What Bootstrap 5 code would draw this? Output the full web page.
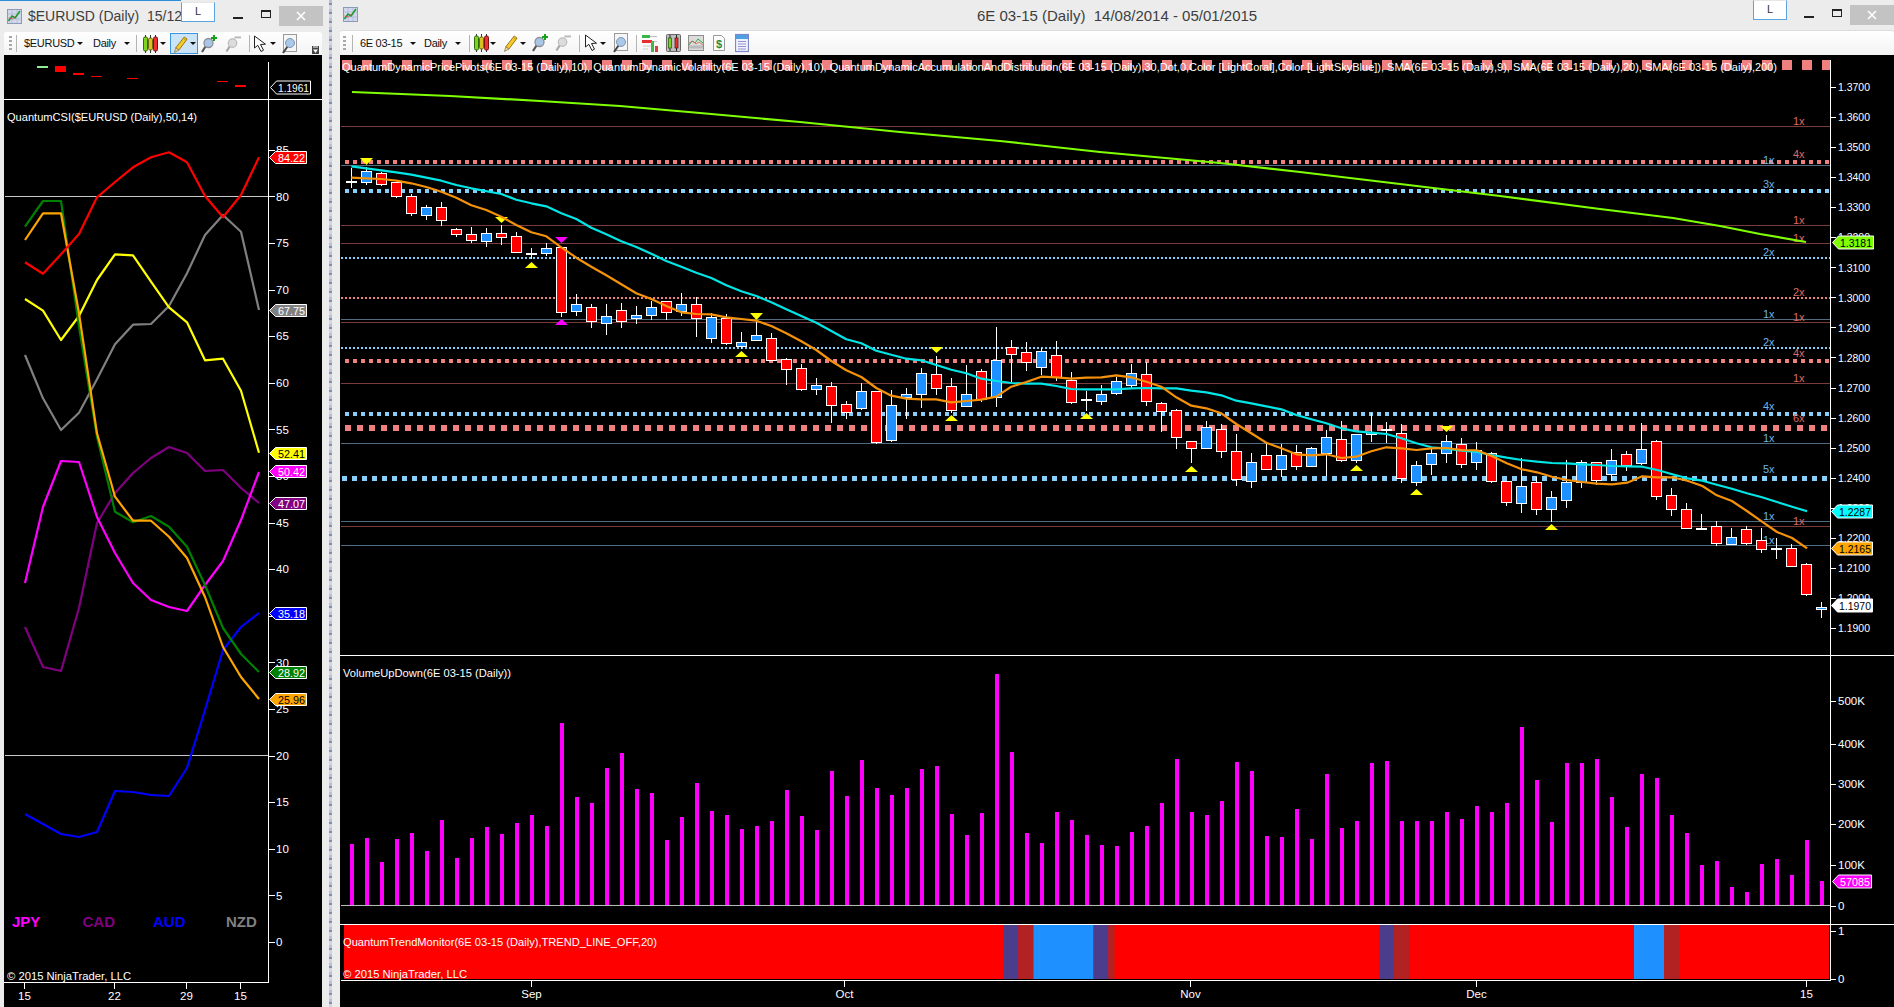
<!DOCTYPE html>
<html lang="en">
<head>
<meta charset="utf-8">
<title>6E 03-15 (Daily)</title>
<link href="https://cdn.jsdelivr.net/npm/bootstrap@5.3.0/dist/css/bootstrap.min.css" rel="stylesheet">
<style>
html,body{height:100%;overflow:hidden;margin:0}
body{font-family:"Liberation Sans",Arial,sans-serif;background:#ececec}
.desk{height:1007px}
.win{background:#ececec;height:1007px}
.win-l{width:329px;flex:none;padding:0 7px 0 4px}
.wallpaper{width:3px;flex:none;background:repeating-linear-gradient(180deg,#b9bfd6 0 3px,#7f8fb5 3px 5px,#d6d3e0 5px 9px)}
.win-r{flex:1 1 auto;padding-left:8px;min-width:0}
.ttl{color:#3d3d3d;font-size:14px;white-space:pre}
.ttl-l{height:32px;margin-left:-4px;margin-right:-7px;padding-left:7px;background:linear-gradient(#2b8fd8,#2b8fd8) no-repeat 0 0/181px 1px}
.ttl-r{height:30px;margin-left:-8px;padding-left:11px}
.wicon{width:15px;height:15px;flex:none}
.ttl-r .wicon{margin-top:-1px}
.ttxt{margin-left:6px}
.ttxt-c{position:absolute;left:645px;top:5px;font-size:15px}
.ltab{position:absolute;top:1px;height:20px;width:34px;background:#fff;border:1px solid #5aa3e0;border-top-color:#e6e6e6;font-size:11px;color:#333;text-align:center;line-height:17px}
.ltab-l{left:181px;top:2px}
.ltab-r{left:1421px;top:0}
.cbox{height:22px;align-items:center}
.cmin{width:10px;height:2.5px;background:#222;margin-top:4px}
.cmax{width:10px;height:8px;border:1.5px solid #222;border-top-width:2.5px;margin-left:18px;margin-top:-5px}
.cx{width:44px;height:20px;background:#c3c3c3;margin-left:8px;display:flex;align-items:center;justify-content:center}
.cbox-l{margin-right:6px;margin-top:0}
.cbox-l .cmax{margin-left:18px}
.tbar{height:23px;background:linear-gradient(#ffffff,#f3f3f3);font-size:11px;color:#111;border-radius:3px 3px 0 0;white-space:nowrap;flex:none}
.tbar-r{height:25px;border-top:1px solid #dcdcdc}
.sym{flex:none;letter-spacing:-.3px}
.sym-50{width:50px}.sym-43{width:43px}.sym-26{width:26px}
.ic{flex:none;height:20px}
.w3{width:3px}.w6{width:6px}.w12{width:12px}.w14{width:14px}.w15{width:15px}.w16{width:16px}
.grip{width:3px;height:15px;background:repeating-linear-gradient(180deg,#a8a8a8 0 2px,transparent 2px 4px);flex:none}
.vsep{width:1px;height:17px;background:#b4b4b4;flex:none}
.tcaret{width:0;height:0;border-left:3px solid transparent;border-right:3px solid transparent;border-top:3px solid #111;flex:none}
.hot{width:28px;height:21px;background:#cce4f7;border:1px solid #3a94e0;flex:none}
.more{width:7px;height:8px;flex:none;margin-right:3px;margin-top:13px}
.mg1{margin-left:1px}.mg2{margin-left:2px}.mg3{margin-left:3px}.mg4{margin-left:4px}.mg5{margin-left:5px}.mg6{margin-left:6px}.mg7{margin-left:7px}.mg8{margin-left:8px}.mg9{margin-left:9px}.mg10{margin-left:10px}
.chart{display:block;background:#000;flex:none}
.chart-l{width:318px;height:952px}
.chart-r{width:1554px;height:952px}
.chart text{font-family:"Liberation Sans",Arial,sans-serif;font-size:11px;fill:#fff}
.chart text.lg{font-size:11.5px}
.chart text.ccy{font-size:15px;font-weight:700}
.chart text.ax{font-size:11.5px}
</style>
</head>
<body>
<svg width="0" height="0" class="position-absolute">
<defs>
<symbol id="wi" viewBox="0 0 15 15"><rect x=".5" y=".5" width="14" height="14" fill="#cfd8ec" stroke="#8d99b8"/><path d="M1 5h13M1 10h13M5 1v13M10 1v13" stroke="#aab4cc" stroke-width=".6"/><path d="M1.500 12 5 7l3 2 5-7" fill="none" stroke="#1d9a2a" stroke-width="1.600"/><path d="M1.500 9l4 1 3-3" fill="none" stroke="#d34a4a" stroke-width=".8"/></symbol>
<symbol id="candles" viewBox="0 0 15 20"><path d="M2.500 1v18M7.500 1v18M12.500 1v18" stroke="#333"/><rect x=".5" y="3" width="4" height="14" rx="1.500" fill="#7ed321" stroke="#2e6b0a"/><rect x="5.500" y="4" width="4" height="12" rx="1.500" fill="#d8c020" stroke="#6d6a10"/><rect x="10.500" y="3" width="4" height="14" rx="1.500" fill="#ee3030" stroke="#7a1010"/></symbol>
<symbol id="pencil" viewBox="0 0 16 20"><path d="M3 14 12 2.500l3 2.300L6.200 16.500z" fill="#f7c92c" stroke="#92710a"/><path d="M3 14l3.200 2.500L1.500 19z" fill="#efd7a6" stroke="#7a6a40" stroke-width=".7"/><path d="M11 4l3 2.300" stroke="#c98e10"/></symbol>
<symbol id="magplus" viewBox="0 0 16 20"><path d="M4.500 12.500 1 18" stroke="#555" stroke-width="2.200"/><circle cx="7.500" cy="9" r="4.500" fill="#a9c6e6" stroke="#8c8f96" stroke-width="1.300"/><path d="M13 1v6M10 4h6" stroke="#14a314" stroke-width="2"/></symbol>
<symbol id="maggrey" viewBox="0 0 17 20"><path d="M5 12.500 1.500 18" stroke="#a5a5a5" stroke-width="2.200"/><circle cx="8" cy="9" r="4.500" fill="#dcdcdc" stroke="#bcbcbc" stroke-width="1.300"/><path d="M10 3h7" stroke="#b8b8b8" stroke-width="2"/></symbol>
<symbol id="cursor" viewBox="0 0 14 20"><path d="M1.500 2 1.500 14 4.800 11.300 8 17.500 10.500 16.200 7.500 10.500 12.500 10.200z" fill="#fff" stroke="#222" stroke-width="1"/></symbol>
<symbol id="pagemag" viewBox="0 0 15 20"><rect x="1.500" y=".5" width="13" height="17" fill="#f6f6f6" stroke="#9a9a9a"/><path d="M5.500 12.500 1 19" stroke="#444" stroke-width="2"/><circle cx="8" cy="9" r="4.500" fill="#a9c8ea" stroke="#7f96b5"/></symbol>
<symbol id="ic1" viewBox="0 0 16 20"><rect x="0" y="2" width="8" height="3" fill="#39b54a"/><path d="M8 3.500h7" stroke="#bbb"/><rect x="0" y="7" width="10" height="3" fill="#e62e2e"/><path d="M10 8.500h5M1 13h8M1 16h5" stroke="#ccc"/><rect x="9" y="8" width="3" height="11" fill="#45b649"/><rect x="13" y="13" width="3" height="6" fill="#d94040"/></symbol>
<symbol id="ic2" viewBox="0 0 15 20"><rect x=".5" y="1.500" width="14" height="17" rx="1" fill="#bdbdbd" stroke="#666"/><path d="M4 2v16M10.500 2v16" stroke="#222"/><rect x="2.500" y="5" width="3" height="10" fill="#7ed321" stroke="#225510" stroke-width=".7"/><rect x="9" y="5" width="3" height="10" fill="#e83030" stroke="#601010" stroke-width=".7"/></symbol>
<symbol id="ic3" viewBox="0 0 16 20"><rect x=".5" y="2.500" width="15" height="15" fill="#dcdcdc" stroke="#8e8e8e"/><path d="M1 12l3-4 3 2 3-4 5 4" fill="none" stroke="#2eaa44"/><path d="M1 10l4-2 3 3 3-2 4 3" fill="none" stroke="#d9605f" stroke-width=".8"/><path d="M1 14h14" stroke="#999" stroke-width="3" opacity=".5"/></symbol>
<symbol id="ic4" viewBox="0 0 12 20"><path d="M.5 2.500h8l3 3v12H.5z" fill="#fbfbfb" stroke="#9a9a9a"/><text x="6" y="15" text-anchor="middle" font-family="Liberation Sans" font-weight="700" font-size="11" fill="#1f8f3c">$</text></symbol>
<symbol id="ic5" viewBox="0 0 14 20"><rect x=".5" y="1.500" width="13" height="17" fill="#eef2fb" stroke="#7d86c8" stroke-width="1.200"/><rect x="1" y="2" width="12" height="4" fill="#4fa0e3"/><path d="M3 8.500h8M3 11h8M3 13.500h8M3 16h8" stroke="#9a8fd0"/></symbol>
</defs>
</svg>

<div class="desk d-flex">
  <section class="win win-l d-flex flex-column">
    <header class="ttl ttl-l d-flex align-items-center position-relative">
      <svg class="wicon"><use href="#wi"/></svg><span class="ttxt">$EURUSD (Daily)  15/12</span>
      <span class="ltab ltab-l">L</span>
      <div class="cbox cbox-l ms-auto d-flex"><span class="cmin"></span><span class="cmax"></span><span class="cx"><svg width="10" height="10" viewBox="0 0 10 10"><path d="M1 1l8 8M9 1l-8 8" stroke="#fff" stroke-width="1.600"/></svg></span></div>
    </header>
    <nav class="tbar d-flex align-items-center">
      <span class="grip mg5"></span><span class="vsep mg4"></span>
      <span class="sym sym-50 mg7">$EURUSD</span><span class="tcaret mg3"></span>
      <span class="sym sym-26 mg10">Daily</span><span class="tcaret mg5"></span>
      <span class="vsep mg6"></span>
      <svg class="ic w15 mg6"><use href="#candles"/></svg><span class="tcaret mg2"></span>
      <span class="hot mg4 d-flex align-items-center"><svg class="ic w15 mg2"><use href="#pencil"/></svg><span class="tcaret mg2"></span></span>
      <svg class="ic w16 mg3"><use href="#magplus"/></svg>
      <svg class="ic w16 mg8"><use href="#maggrey"/></svg>
      <span class="vsep mg8"></span>
      <svg class="ic w14 mg3"><use href="#cursor"/></svg><span class="tcaret mg3"></span>
      <svg class="ic w15 mg6"><use href="#pagemag"/></svg>
      <svg class="more ms-auto" viewBox="0 0 7 8"><rect width="7" height="8" fill="#444"/><path d="M1 1h5" stroke="#fff"/><path d="M1 3.500h5L3.500 7z" fill="#fff"/></svg>
    </nav>
    <svg id="cl" class="chart chart-l" viewBox="4 55 318 952"></svg>
  </section>
  <div class="wallpaper"></div>
  <section class="win win-r d-flex flex-column">
    <header class="ttl ttl-r d-flex align-items-center position-relative">
      <svg class="wicon"><use href="#wi"/></svg>
      <span class="ttxt-c">6E 03-15 (Daily)  14/08/2014 - 05/01/2015</span>
      <span class="ltab ltab-r">L</span>
      <div class="cbox ms-auto d-flex"><span class="cmin"></span><span class="cmax"></span><span class="cx"><svg width="10" height="10" viewBox="0 0 10 10"><path d="M1 1l8 8M9 1l-8 8" stroke="#fff" stroke-width="1.600"/></svg></span></div>
    </header>
    <nav class="tbar tbar-r d-flex align-items-center">
      <span class="grip mg3"></span><span class="vsep mg6"></span>
      <span class="sym sym-43 mg7">6E 03-15</span><span class="tcaret mg7"></span>
      <span class="sym sym-26 mg8">Daily</span><span class="tcaret mg5"></span>
      <span class="vsep mg8"></span>
      <svg class="ic w15 mg4"><use href="#candles"/></svg><span class="tcaret mg1"></span>
      <svg class="ic w15 mg7"><use href="#pencil"/></svg><span class="tcaret mg2"></span>
      <svg class="ic w16 mg6"><use href="#magplus"/></svg>
      <svg class="ic w16 mg7"><use href="#maggrey"/></svg>
      <span class="vsep mg8"></span>
      <svg class="ic w14 mg4"><use href="#cursor"/></svg><span class="tcaret mg2"></span>
      <svg class="ic w15 mg7"><use href="#pagemag"/></svg>
      <span class="vsep mg8"></span>
      <svg class="ic w16 mg5"><use href="#ic1"/></svg>
      <svg class="ic w15 mg8"><use href="#ic2"/></svg>
      <svg class="ic w16 mg7"><use href="#ic3"/></svg>
      <svg class="ic w12 mg9"><use href="#ic4"/></svg>
      <svg class="ic w14 mg10"><use href="#ic5"/></svg>
    </nav>
    <svg id="cr" class="chart chart-r" viewBox="340 55 1554 952"></svg>
  </section>
</div>

<script>
(function(){
const esc=s=>String(s).replace(/&/g,'&amp;').replace(/</g,'&lt;');
const T=(x,y,s,o={})=>`<text x="${x}" y="${y}"${o.c?` class="${o.c}"`:''}${o.f?` style="fill:${o.f}"`:''}${o.a?` text-anchor="${o.a}"`:''}${o.len?` textLength="${o.len}" lengthAdjust="spacingAndGlyphs"`:''}>${esc(s)}</text>`;
const L=(x1,y1,x2,y2,c,w=1,extra='')=>`<line x1="${x1}" y1="${y1}" x2="${x2}" y2="${y2}" stroke="${c}" stroke-width="${w}" ${extra}/>`;
const R=(x,y,w,h,c,extra='')=>`<rect x="${x}" y="${y}" width="${w}" height="${h}" fill="${c}" ${extra}/>`;
const P=(pts,c,w=2.2)=>`<polyline points="${pts.map(p=>p[0].toFixed(1)+','+p[1].toFixed(1)).join(' ')}" fill="none" stroke="${c}" stroke-width="${w}" stroke-linejoin="round"/>`;
const TAG=(x,y,w,h,fill,tc,s,len)=>`<polygon points="${x},${y} ${x+6},${y-h/2} ${x+w},${y-h/2} ${x+w},${y+h/2} ${x+6},${y+h/2}" fill="${fill}" stroke="#fff"/>`+T(x+w-len-1.5,y+4.2,s,{c:'ax',f:tc,len:len});
const hy=y=>Math.round(y)+.5;

/* ---- left chart ---- */
let a='';
[[37,66,11,2,'#90ee90'],[55,66,11,6,'#f00'],[73,73,11,2,'#f00'],[91,76,11,1,'#f00'],[127,78,11,1,'#f00'],[217,81,11,1,'#f00'],[235,85,11,2,'#f00']].forEach(b=>a+=R(b[0],b[1],b[2],b[3],b[4]));
a+=L(4,99.5,322,99.5,'#fff');
a+=L(5,196.5,268,196.5,'#c8c8c8')+L(5,755.5,268,755.5,'#c8c8c8');
a+=L(268.5,62,268.5,982,'#fff')+L(4,982.5,269,982.5,'#fff');
for(let v=0;v<=85;v+=5){const y=942-9.32*v;a+=L(269,hy(y),275,hy(y),'#fff')+T(276,y+4.2,v,{c:'ax'});}
[[24,'15'],[114,'22'],[186,'29'],[240,'15']].forEach(t=>{a+=L(t[0]+.5,983,t[0]+.5,989,'#fff')+T(t[0]+.5,1000,t[1],{c:'ax',a:'middle'});});
a+=T(7,121,'QuantumCSI($EURUSD (Daily),50,14)',{len:190});
const lx=i=>25+18*i, z8=z=>100+z/3;
const mk=arr=>arr.map((y,i)=>[lx(i),y]);
const S={
 grey:[765,895,990,938,838,733,674,672,618,520,405,345,395,630].map(z8),
 yellow:[597,632,720,648,540,463,466,545,622,667,781,776,872,1058].map(z8),
 purple:[627,667,671,608,523,493,473,458,447,453,471,470,488,503],
 magenta:[583,507,461,462,517,553,583,600,607,611,585,561,520,472],
 blue:[814,824,834,837,832,791,792,795,796,768,710,650,627,613],
 green:[226.7,201,201,326.7,436.7,511.7,522.3,516,526.7,546.7,585,628,654,672],
 orange:[240,213.3,213.3,313.3,433.3,496.7,520.7,520.7,536.7,558,597,647,677,699],
 red:[487,521,463,402,292,246,202,172,157,187,288,352,285,172].map(z8)
};
a+=P(mk(S.grey),'#808080')+P(mk(S.yellow),'#ffff00')+P(mk(S.purple),'#800080')+P(mk(S.magenta),'#ff00ff')+P(mk(S.blue),'#0000ff')+P(mk(S.green),'#008000')+P(mk(S.orange),'#ffa500')+P(mk(S.red),'#ff0000');
a+=TAG(270.5,87.500,40,13,'#000','#fff','1.1961',31);
[[157,'#f00','#fff','84.22'],[310,'#808080','#fff','67.75'],[453,'#ff0','#000','52.41'],[471,'#f0f','#fff','50.42'],[503,'#800080','#fff','47.07'],[613,'#00f','#fff','35.18'],[672,'#008000','#fff','28.92'],[699,'#ffa500','#000','25.96']].forEach(t=>a+=TAG(269.5,t[0]+.5,37,12,t[1],t[2],t[3],27));
[[12,'JPY','#ff00ff'],[82.5,'CAD','#800080'],[153,'AUD','#0000ff'],[226,'NZD','#808080']].forEach(t=>a+=T(t[0],927,t[1],{c:'ccy',f:t[2]}));
a+=T(7,980,'© 2015 NinjaTrader, LLC',{len:124});
document.getElementById('cl').innerHTML=a;

/* ---- right chart ---- */
let b='';
const CORAL='#f08080',SKY='#87cefa',CL='#7d3c3c',BL='#4f6c80',CT='#d96a6a',BT='#69b4ec';
const dot=(y,s,p,c,x0=345)=>L(x0,y,1830,y,c,s,`stroke-dasharray="${s} ${p-s}"`);
b+=L(342,65,1830,65,CORAL,10,'stroke-dasharray="10 10"');
[[126,CL],[165,BL],[225,CL],[243,CL],[319,BL],[322,CL],[383,CL],[443,BL],[521,BL],[526,CL],[545,BL]].forEach(l=>b+=L(341,l[0]+.5,1830,l[0]+.5,l[1]));
b+=dot(162,4,8,CORAL)+dot(191,4,8,SKY)+dot(258,2,4,SKY,341)+dot(298,2,4,CORAL,341)+dot(348,2,4,SKY,341)+dot(361,4,8,CORAL)+dot(414,4,8,SKY)+dot(428,6,12,CORAL)+dot(478.5,5,10,SKY,342);
[[1793,125,'1x',CT],[1793,158,'4x',CT],[1763,164,'1x',BT],[1763,188,'3x',BT],[1793,224,'1x',CT],[1793,242,'1x',CT],[1763,256,'2x',BT],[1793,296,'2x',CT],[1763,318,'1x',BT],[1793,321,'1x',CT],[1763,346,'2x',BT],[1793,357,'4x',CT],[1793,382,'1x',CT],[1763,410,'4x',BT],[1793,422,'6x',CT],[1763,442,'1x',BT],[1763,473,'5x',BT],[1763,520,'1x',BT],[1793,525,'1x',CT],[1763,544,'1x',BT]].forEach(t=>b+=T(t[0],t[1],t[2],{f:t[3]}));
b+=T(342,71,'QuantumDynamicPricePivots(6E 03-15 (Daily),10), QuantumDynamicVolatility(6E 03-15 (Daily),10), QuantumDynamicAccumulationAndDistribution(6E 03-15 (Daily),30,Dot,0,Color [LightCoral],Color [LightSkyBlue]), SMA(6E 03-15 (Daily),9), SMA(6E 03-15 (Daily),20), SMA(6E 03-15 (Daily),200)',{len:1435});

const A=[['d',155,155,113,173],['b',124,155,112,165],['r',130,161,125,167],['r',157,197,157,203],['r',199,248,193,257],['b',232,254,225,270],['r',232,269,217,287],['r',298,311,294,320],['r',313,329,291,339],['b',310,332,294,351],['r',310,320,285,345],['r',319,365,306,369],['d',371,371,354,388],['b',355,368,339,378],['r',352,545,350,561],['b',523,542,492,558],['r',530,572,522,594],['b',559,578,522,614],['r',541,572,519,594],['b',556,563,528,582],['b',532,554,513,570],['r',514,545,514,570],['b',523,542,489,558],['r',523,563,501,621],['b',562,623,549,639],['r',563,638,552,645],['b',637,647,606,657],['b',616,629,575,632],['r',625,689,609,693],['r',688,716,684,765],['r',715,776,702,782],['b',766,776,744,795],['r',769,824,756,879],['r',823,845,813,867]].map(c=>[c[0],130+c[1]/3,130+c[2]/3,130+c[3]/3,130+c[4]/3]);
const B=[['b',274,323,250,329],['r',274,425,274,431],['b',316,419,270,425],['b',283,290,264,357],['b',220,281,205,324],['r',223,263,168,285],['r',259,329,235,340],['b',283,317,195,317],['r',214,298,207,305],['b',181,290,82,320],['r',142,161,120,245],['r',157,185,126,213],['b',154,200,145,226],['r',166,230,123,243],['r',241,305,216,312],['d',299,299,273,333],['b',283,302,255,315],['b',244,278,231,285],['b',220,254,192,264],['r',223,302,187,318],['r',310,332,306,396],['r',331,410,327,447],['r',424,443,424,489],['b',382,443,363,447],['r',388,452,373,474],['r',454,536,402,558],['b',487,542,459,564],['r',466,506,430,510],['b',466,506,432,530],['r',457,497,435,510],['b',445,497,441,500],['b',412,458,391,528],['r',418,479,363,486],['b',403,479,403,490]].map(c=>[c[0],300+c[1]/3,300+c[2]/3,300+c[3]/3,300+c[4]/3]);
const Cc=[['b',155,162,100,185],['d',149,149,127,190],['r',158,295,132,308],['b',254,307,243,317],['b',220,251,208,285],['b',182,220,165,248],['r',191,253,175,264],['b',210,245,186,270],['r',220,304,217,308],['r',302,367,302,378],['b',317,370,235,398],['r',305,388,290,405],['b',352,388,334,425],['b',307,361,240,384],['b',247,307,240,324],['r',245,301,245,314],['b',239,281,208,303],['r',221,254,214,273],['b',206,248,130,255],['r',184,349,181,359],['r',344,388,324,408],['r',388,443,370,445],['d',446,446,403,449],['r',439,488,424,497],['b',472,491,444,495],['r',446,488,438,495],['r',481,506,444,518],['d',507,507,475,537],['r',505,557,492,560],['r',553,641,550,647],['b',680,688,667,714]].map(c=>[c[0],380+c[1]/3,380+c[2]/3,380+c[3]/3,380+c[4]/3]);
const cx=i=>351+15*i;
[...A,...B,...Cc].forEach((c,i)=>{const x=cx(i)+.5;
  b+=L(x,Math.round(c[3]),x,Math.round(c[4]),'#fff');
  if(c[0]==='d'){const y=Math.round(c[1]);b+=L(x-5.5,y,x+5.5,y,'#fff',2);}
  else{const t=hy(c[1]),e=hy(c[2]);b+=R(x-5,t,10,Math.max(1,e-t),c[0]==='r'?'#ff0000':'#1e90ff','stroke="#fff" stroke-width="1"');}
});
const tri=(i,y1,y2,c,up)=>{const x=cx(i)+.5;b+=up?`<polygon points="${x-6.5},${y2} ${x+6.5},${y2} ${x},${y1}" fill="${c}"/>`:`<polygon points="${x-6.5},${y1} ${x+6.5},${y1} ${x},${y2}" fill="${c}"/>`;};
const Y='#ffff00',M='#ff00ff';
tri(1,158,165,Y,0);tri(10,217,223,Y,0);tri(12,262,268,Y,1);tri(14,237,243,M,0);tri(14,319,325,M,1);tri(26,351,357,Y,1);tri(27,313,320,Y,0);
tri(39,347,353,Y,0);tri(40,415,421,Y,1);tri(49,413,419,Y,1);tri(56,466,472,Y,1);tri(67,465,471,Y,1);
tri(71,489,495,Y,1);tri(73,426,432,Y,0);tri(80,524,530,Y,1);

const z3=p=>[340+p[0]/3,130+p[1]/3],z4=p=>[850+p[0]/3,300+p[1]/3],z5=p=>[1370+p[0]/2.99,380+p[1]/3];
const cyan=[...[[34,109],[79,115],[169,127],[214,134],[304,152],[349,165],[394,175],[484,192],[529,209],[574,220],[619,229],[664,250],[709,267],[754,293],[799,313],[844,334],[889,351],[934,371],[979,393],[1024,410],[1069,428],[1114,444],[1159,466],[1204,484],[1249,498],[1294,517],[1339,538],[1384,558],[1429,578],[1474,603],[1519,628]].map(z3),
 ...[[34,130],[79,152],[124,164],[169,176],[214,181],[259,195],[304,209],[349,220],[394,236],[439,243],[484,249],[529,251],[574,251],[619,258],[664,267],[709,268],[754,268],[799,268],[844,265],[889,264],[934,265],[979,265],[1024,272],[1069,277],[1114,286],[1159,302],[1204,310],[1249,319],[1294,328],[1339,345],[1384,358],[1429,370],[1474,385],[1519,394]].map(z4),
 ...[[4,158],[49,162],[94,175],[139,190],[184,202],[229,206],[274,212],[319,216],[364,225],[409,233],[454,240],[499,245],[544,249],[589,250],[634,253],[679,255],[724,258],[769,259],[814,260],[859,270],[904,283],[949,295],[994,302],[1037,314],[1082,326],[1127,340],[1172,352],[1217,366],[1262,380],[1307,394]].map(z5)];
const orange=[...[[34,143],[79,145],[124,147],[169,152],[214,160],[259,171],[304,185],[349,203],[394,226],[439,240],[484,260],[529,285],[574,307],[619,319],[664,352],[709,383],[754,410],[799,436],[844,463],[889,490],[934,507],[979,528],[1024,547],[1069,552],[1114,553],[1159,562],[1204,567],[1249,572],[1294,588],[1339,610],[1384,634],[1429,660],[1474,693],[1519,721]].map(z3),
 ...[[34,231],[79,264],[124,287],[169,296],[214,298],[259,298],[304,307],[349,303],[394,299],[439,290],[484,260],[529,246],[574,230],[619,232],[664,236],[709,233],[754,232],[799,226],[844,232],[889,245],[934,260],[979,292],[1024,317],[1069,325],[1114,340],[1159,372],[1204,400],[1249,428],[1294,445],[1339,463],[1384,466],[1429,463],[1474,474],[1519,470]].map(z4),
 ...[[4,214],[49,202],[94,205],[139,210],[184,205],[229,204],[274,210],[319,211],[364,228],[409,250],[454,268],[499,277],[544,290],[589,300],[634,306],[679,311],[724,313],[769,308],[814,289],[859,292],[904,292],[949,302],[994,318],[1037,346],[1082,363],[1127,393],[1172,425],[1217,456],[1262,474],[1307,505]].map(z5)];
const lime=[[352,92],[450,96],[540,101],[620,106],[700,113],[800,122],[900,132],[1000,141],[1100,152],[1220,163],[1300,172],[1400,184],[1500,196],[1600,209],[1673,218],[1720,226],[1760,234],[1806,242]];
b+=P(lime,'#7fff00')+P(cyan,'#00e6e6')+P(orange,'#f5920a');

/* panes */
b+=L(340,655.5,1894,655.5,'#fff')+L(340,924.5,1894,924.5,'#fff');
b+=L(341,905.5,1830,905.5,'#b8b8b8');
const vt=[522,504,576,507,489,543,450,564,504,471,492,459,435,468,159,381,399,294,249,357,369,510,441,339,423,435,477,468,453,360,438,480,303,378,270,354,375,354,297,288,432,495,429,12,246,489,519,426,450,495,525,528,486,468,399,267,426,435,393,276,303,498,501,417,507,312,474].map(z=>670+z/3)
 .concat([821,763,761,821,821,821,812,819,806,812,803,727,780,822,763,763,759,797,827,774,778,815,833,865,861,887,892,864,859,875,840,881]);
vt.forEach((y,i)=>{const t=Math.round(y);b+=R(cx(i)-2+1,t,4,905-t,'#ff00ff');});
b+=T(343,677,'VolumeUpDown(6E 03-15 (Daily))',{len:168});
b+=R(344,925,1485,54,'#ff0000');
[[1003.5,15,'#4b3d8b'],[1018.5,15,'#b22222'],[1033.5,60,'#1e90ff'],[1093.5,15,'#4b3d8b'],[1108.5,6,'#b22222'],[1379,15,'#4b3d8b'],[1394,15,'#b22222'],[1634,30,'#1e90ff'],[1664,15,'#b22222']].forEach(t=>b+=R(t[0],925,t[1],54,t[2]));
b+=T(343,946,'QuantumTrendMonitor(6E 03-15 (Daily),TREND_LINE_OFF,20)',{len:314});
b+=T(343,978,'© 2015 NinjaTrader, LLC',{len:124});
b+=L(341,980.5,1831,980.5,'#fff')+L(1830.5,60,1830.5,981,'#fff');
[[531,'Sep'],[844,'Oct'],[1190,'Nov'],[1476,'Dec'],[1806,'15']].forEach(t=>{b+=L(t[0]+.5,981,t[0]+.5,987,'#fff')+T(t[0]+.5,998,t[1],{c:'ax',a:'middle'});});
for(let k=0;k<=18;k++){const p=1.37-k*0.01,y=87+k*30.05;b+=L(1831,hy(y),1836,hy(y),'#fff')+T(1838,y+4.2,p.toFixed(4),{c:'ax',len:32});}
[[906,'0'],[865,'100K'],[824,'200K'],[784,'300K'],[744,'400K'],[701,'500K']].forEach(t=>b+=L(1831,t[0]+.5,1836,t[0]+.5,'#fff')+T(1838,t[0]+4.2,t[1],{c:'ax'}));
[[931,'1'],[979,'0']].forEach(t=>b+=L(1831,t[0]+.5,1836,t[0]+.5,'#fff')+T(1838,t[0]+4.2,t[1],{c:'ax'}));
b+=TAG(1832.5,242.5,41,13,'#7fff00','#000','1.3181',32)+TAG(1831.5,511.500,41,13,'#00ffff','#000','1.2287',32)+TAG(1831.5,548.500,41,13,'#ffa500','#000','1.2165',32)+TAG(1831.5,605.500,41,13,'#fff','#000','1.1970',32)+TAG(1832.5,881.5,39,13,'#ff00ff','#fff','57085',30);
document.getElementById('cr').innerHTML=b;
})();
</script>
<script src="https://cdn.jsdelivr.net/npm/bootstrap@5.3.0/dist/js/bootstrap.bundle.min.js"></script>
</body>
</html>
